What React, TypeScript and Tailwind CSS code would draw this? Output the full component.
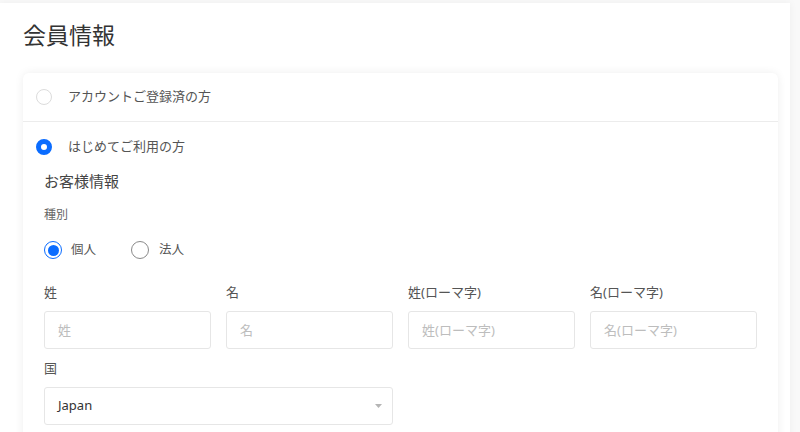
import { useState } from "react";

const font = { fontFamily: '"Noto Sans", "Noto Sans CJK JP", sans-serif' };

type FieldProps = { label: string };

const TextField = ({ label }: FieldProps) => (
  <div className="flex flex-col">
    <label className="h-[18px] text-[13px] leading-[18px] text-[#555]">{label}</label>
    <input
      placeholder={label}
      className="mt-[10px] h-[38px] w-full rounded-[3px] border border-[#e6e6e6] bg-white px-[13px] text-[13px] text-[#333] outline-none placeholder:text-[#bdbdbd]"
    />
  </div>
);

const PlanRadio = ({ checked }: { checked: boolean }) =>
  checked ? (
    <span className="box-border block h-4 w-4 rounded-full border-[5px] border-[#0a6cff] bg-white" />
  ) : (
    <span className="box-border block h-4 w-4 rounded-full border border-[#dcdcdc] bg-white" />
  );

const KindRadio = ({ checked }: { checked: boolean }) =>
  checked ? (
    <span className="box-border flex h-[18px] w-[18px] items-center justify-center rounded-full border-[1.5px] border-[#0a6cff] bg-white">
      <span className="block h-[11px] w-[11px] rounded-full bg-[#0a6cff]" />
    </span>
  ) : (
    <span className="box-border block h-[18px] w-[18px] rounded-full border-[1.5px] border-[#8a8a8a] bg-white" />
  );

export default function App() {
  const [plan, setPlan] = useState<"member" | "new">("new");
  const [kind, setKind] = useState<"personal" | "corp">("personal");

  return (
    <div className="h-[432px] overflow-hidden bg-[#f9f9f9]" style={font}>
      <div className="mt-[3px] h-[460px] w-[790px] bg-white pl-[23px] pr-[12px] shadow-[0_0_8px_rgba(0,0,0,0.05)]">
        <h1 className="pt-[17px] text-[23px] leading-[30px] text-[#333]">会員情報</h1>

        <div className="mt-[23px] rounded-[6px] bg-white shadow-[0_0_10px_rgba(0,0,0,0.07)]">
          <button
            onClick={() => setPlan("member")}
            className="flex h-[49px] w-full items-center gap-[16px] border-b border-[#ececec] pl-[13px] text-left"
          >
            <PlanRadio checked={plan === "member"} />
            <span className="text-[13px] text-[#555]">アカウントご登録済の方</span>
          </button>

          <div className="px-[21px] pb-6">
            <button
              onClick={() => setPlan("new")}
              className="-ml-[8px] flex h-[49px] items-center gap-[16px] text-left"
            >
              <PlanRadio checked={plan === "new"} />
              <span className="text-[13px] text-[#555]">はじめてご利用の方</span>
            </button>

            <h2 className="-mt-[1px] text-[15px] leading-[22px] text-[#444]">お客様情報</h2>

            <p className="mt-[14px] text-[12px] leading-[18px] text-[#666]">種別</p>

            <div className="mt-[17px] flex items-center">
              <button onClick={() => setKind("personal")} className="flex items-center gap-[9px]">
                <KindRadio checked={kind === "personal"} />
                <span className="text-[12.5px] text-[#555]">個人</span>
              </button>
              <button onClick={() => setKind("corp")} className="ml-[35px] flex items-center gap-[10px]">
                <KindRadio checked={kind === "corp"} />
                <span className="text-[12.5px] text-[#555]">法人</span>
              </button>
            </div>

            <div className="mt-[23px] grid grid-cols-4 gap-x-[15px]">
              <TextField label="姓" />
              <TextField label="名" />
              <TextField label="姓(ローマ字)" />
              <TextField label="名(ローマ字)" />
            </div>

            <p className="mt-[10px] h-[18px] text-[13px] leading-[18px] text-[#555]">国</p>

            <div className="mt-[10px] flex h-[38px] w-[349px] items-center justify-between rounded-[3px] border border-[#e6e6e6] bg-white pl-[13px] pr-[10px]">
              <span className="text-[13px] text-[#333]">Japan</span>
              <svg width="7" height="4" viewBox="0 0 7 4">
                <path d="M0 0 L7 0 L3.5 4 Z" fill="#b5b5b5" />
              </svg>
            </div>
          </div>
        </div>
      </div>
    </div>
  );
}
